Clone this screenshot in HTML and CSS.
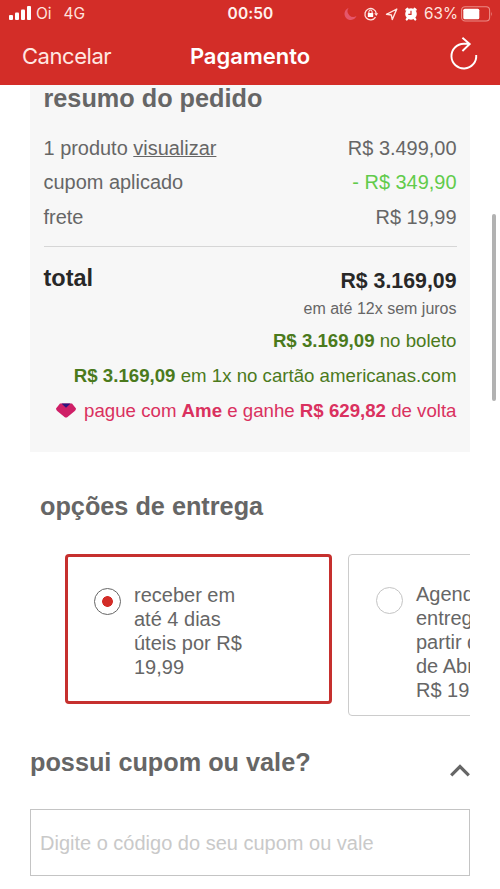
FILE: index.html
```html
<!DOCTYPE html>
<html lang="pt-BR">
<head>
<meta charset="utf-8">
<title>Pagamento</title>
<link rel="stylesheet" href="styles.css">
</head>
<body>
<div class="screen">
  <header class="header">
    <div class="status">
      <div class="carrier">
        <svg class="signal" width="22" height="14" viewBox="0 0 22 14" fill="#fff"><rect x="0" y="9" width="4" height="5" rx="1"/><rect x="6" y="6.5" width="4" height="7.500" rx="1"/><rect x="12" y="3.500" width="4" height="10.500" rx="1"/><rect x="18" y="0" width="4" height="14" rx="1"/></svg>
        <span class="operator">Oi</span><span class="network">4G</span>
      </div>
      <div class="clock">00:50</div>
      <div class="indicators">
        <svg class="sys-icons" width="80" height="18" viewBox="0 0 80 18" fill="none">
          <path d="M5.500 3A6.200 6.200 0 1 0 13.500 11A5.800 5.800 0 0 1 5.500 3Z" fill="#e5566b"/>
          <path d="M32.500 12.200A5.700 5.700 0 1 1 33.300 8.500" stroke="#ffe3df" stroke-width="1.300"/>
          <path d="M31.200 8.300H35.200L33.200 11Z" fill="#ffe3df"/>
          <rect x="24.800" y="8" width="5.400" height="4" rx=".6" fill="#fff"/>
          <path d="M25.900 8V6.800A1.600 1.600 0 0 1 29.100 6.800V8" stroke="#fff" stroke-width="1"/>
          <path d="M43.500 9.300L53.800 4L49.300 14.600L48.300 10Z" stroke="#ffe3df" stroke-width="1.400" stroke-linejoin="round"/>
          <circle cx="68" cy="9" r="5.800" fill="#fff"/>
          <path d="M63.300 4.800L64.500 3.700M72.700 4.800L71.500 3.700M64.500 13.500L63.700 14.500M71.500 13.500L72.300 14.500" stroke="#fff" stroke-width="2.200" stroke-linecap="round"/>
          <path d="M68 5.700V9.300H65.300" stroke="#d32d28" stroke-width="1.200"/>
        </svg>
        <span class="percent">63%</span>
        <svg class="battery" width="32" height="16" viewBox="0 0 32 16"><rect x=".6" y=".7" width="28" height="14.300" rx="3.500" fill="none" stroke="#ec8b85" stroke-width="1.100"/><rect x="2.300" y="2.700" width="16" height="10.500" rx="1.500" fill="#fff"/><path d="M30 5.500Q31.500 8 30 10.500Z" fill="#ec8b85"/></svg>
      </div>
    </div>
    <nav class="nav">
      <a class="cancel">Cancelar</a>
      <h1 class="title">Pagamento</h1>
      <svg class="reload" width="30" height="34" viewBox="0 0 30 34" fill="none" stroke="#fff" stroke-width="1.900"><path d="M27.200 18A12.400 12.400 0 1 1 14.800 6.700H20.500M13.400 .8L20.700 7L13.400 14"/></svg>
    </nav>
  </header>
  <main class="content">
    <section class="summary">
      <h2 class="heading">resumo do pedido</h2>
      <div class="rows">
        <div class="row"><span>1 produto <u>visualizar</u></span><span>R$ 3.499,00</span></div>
        <div class="row"><span>cupom aplicado</span><span class="discount">- R$ 349,90</span></div>
        <div class="row"><span>frete</span><span>R$ 19,99</span></div>
      </div>
      <div class="total">
        <span class="total-label">total</span>
        <div class="total-values">
          <strong class="price">R$ 3.169,09</strong>
          <span class="installments">em até 12x sem juros</span>
        </div>
      </div>
      <p class="offer"><span><b>R$ 3.169,09</b> no boleto</span></p>
      <p class="offer"><span><b>R$ 3.169,09</b> em 1x no cartão americanas.com</span></p>
      <p class="offer ame"><svg class="gem" width="20" height="15" viewBox="0 0 20 15"><path d="M4 .5H16L20 5.500Q20 7 18.500 8.200L11.500 14Q10 15.200 8.500 14L1.500 8.200Q0 7 0 5.500Z" fill="#cf1f67"/><path d="M5.500 .5H14.500L10 4.800Z" fill="#2c147d"/></svg><span>pague com <b>Ame</b> e ganhe <b>R$ 629,82</b> de volta</span></p>
    </section>
    <section class="delivery">
      <h2 class="heading">opções de entrega</h2>
      <div class="options">
        <div class="option selected"><i class="radio"></i><span>receber em<br>até 4 dias<br>úteis por R$<br>19,99</span></div>
        <div class="option"><i class="radio"></i><span>Agendar<br>entrega a<br>partir de 1<br>de Abril por<br>R$ 19,99</span></div>
      </div>
    </section>
    <section class="coupon">
      <div class="coupon-head">
        <h2 class="heading">possui cupom ou vale?</h2>
        <svg class="chevron" width="20" height="13" viewBox="0 0 20 13" fill="none" stroke="#666" stroke-width="3.200"><path d="M1.200 11.300L10 2.600L18.800 11.300"/></svg>
      </div>
      <input class="code" type="text" placeholder="Digite o código do seu cupom ou vale">
    </section>
  </main>
  <div class="scrollbar"></div>
</div>
</body>
</html>
```
FILE: styles.css
```css
* { box-sizing: border-box; margin: 0; padding: 0; }
body { background: #fff; }
.screen {
  position: relative;
  width: 500px;
  height: 889px;
  overflow: hidden;
  font: 20px/24px "Liberation Sans", Arial, sans-serif;
  color: #666;
}
svg { display: block; flex: none; }

.header { height: 85px; background: #d32d28; color: #fff; font-family: Inter, sans-serif; }
.status { display: grid; grid-template-columns: 1fr auto 1fr; height: 28px; align-items: center; padding: 0 8px 0 9px; }
.carrier { display: flex; align-items: center; font-size: 15.500px; color: #ffe3df; }
.signal { margin-top: -2px; }
.operator { margin-left: 5px; }
.network { margin-left: 12px; }
.clock { font-size: 15.500px; font-weight: 600; letter-spacing: .1px; color: #fff1ee; }
.indicators { display: flex; align-items: center; justify-content: flex-end; }
.percent { margin-left: 1px; font-size: 15.300px; color: #ffe3df; }
.battery { margin-left: 3px; margin-right: -1px; margin-top: -1px; }
.nav { display: grid; grid-template-columns: 1fr auto 1fr; height: 55px; align-items: center; padding: 0 22px; }
.cancel { font-size: 22px; letter-spacing: -.45px; color: #ffe7e2; }
.title { font-size: 22px; font-weight: 600; line-height: 26px; }
.reload { justify-self: end; margin: -3px -1px 0 0; }

.content { padding: 0 30px; }
.heading { font-size: 25.250px; line-height: 30px; font-weight: 700; }
.summary { display: flow-root; height: 367px; padding: 0 13.500px; background: #f7f7f7; }
.summary .heading { margin-top: -2px; }
.rows { display: grid; grid-auto-rows: 34.600px; padding-top: 17.500px; height: 134px; border-bottom: 1px solid #d6d6d6; }
.row { display: flex; justify-content: space-between; align-items: center; font-size: 19.950px; }
.discount { color: #61cb4b; }
.total { display: flex; justify-content: space-between; height: 77px; padding-top: 19px; color: #282828; }
.total-label { font-size: 23.500px; font-weight: 700; }
.total-values { display: flex; flex-direction: column; align-items: flex-end; padding-top: 3px; }
.price { font-size: 21.300px; }
.installments { margin-top: 4px; font-size: 16px; color: #666; }
.offer { display: flex; justify-content: flex-end; align-items: center; height: 34.700px; font-size: 18.660px; color: #4b7a1c; }
.offer.ame { gap: 8px; color: #da315f; }

.delivery { padding-top: 39px; }
.delivery .heading { padding-left: 10px; }
.options { display: flex; align-items: flex-start; gap: 16px; margin-top: 33px; padding-left: 35px; overflow: hidden; }
.option { display: flex; flex: none; gap: 13px; width: 267px; padding: 27px 27px 13px; border: 1px solid #ccc; border-radius: 4px; }
.option.selected { height: 150px; padding: 26px 26px 0; border: 3px solid #c6302e; }
.radio { flex: none; width: 27px; height: 27px; margin-top: 5px; border: 1px solid #c4c4c4; border-radius: 50%; }
.selected .radio { border-color: #666; background: radial-gradient(circle, #d32d28 5px, transparent 5.700px); }

.coupon-head { display: flex; justify-content: space-between; padding-top: 31px; }
.chevron { margin-top: 17px; }
.code { display: block; width: 440px; height: 67px; margin-top: 32px; padding: 2px 9px 0; border: 1px solid #c4c4c4; font: 20px "Liberation Sans", Arial, sans-serif; outline: none; }
.code::placeholder { color: #c9c9c9; opacity: 1; }
.scrollbar { position: absolute; top: 214px; right: 4px; width: 4px; height: 187px; border-radius: 2px; background: #b2b2b2; }
```
